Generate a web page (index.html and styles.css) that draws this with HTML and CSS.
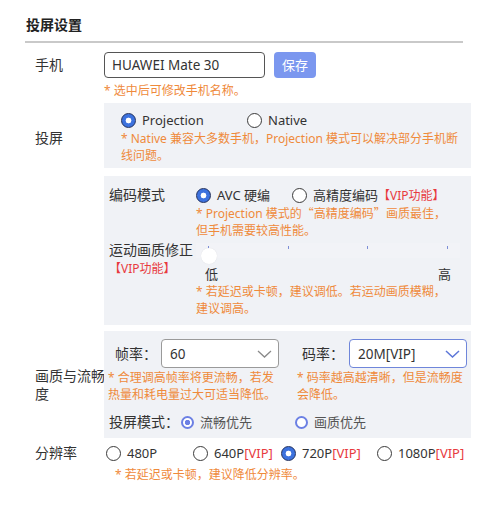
FILE: index.html
```html
<!DOCTYPE html>
<html lang="zh-CN">
<head>
<meta charset="utf-8">
<title>投屏设置</title>
<link rel="stylesheet" href="styles.css">
</head>
<body>
<div class="page">
  <h2 class="title">投屏设置</h2>
  <div class="divider"></div>

  <div class="form">
    <div class="row row-top">
      <div class="label label-input">手机</div>
      <div class="content">
        <div class="phone-line">
          <div class="input">HUAWEI Mate 30</div>
          <div class="btn">保存</div>
        </div>
        <div class="hint hint-phone">* 选中后可修改手机名称。</div>
      </div>
    </div>

    <div class="row row-center">
      <div class="label label-cast">投屏</div>
      <div class="panel panel-cast">
        <div class="radio-group group-cast">
          <span class="radio is-checked"><span class="dot"></span><span class="rtext">Projection</span></span>
          <span class="radio"><span class="dot"></span><span class="rtext">Native</span></span>
        </div>
        <div class="hint">* Native 兼容大多数手机，Projection 模式可以解决部分手机断<br>线问题。</div>
      </div>
    </div>

    <div class="row row-center row-gap8">
      <div class="label"></div>
      <div class="panel panel-codec">
        <div class="sub-label sub-label-codec">编码模式</div>
        <div class="sub-content">
          <div class="radio-group group-codec">
            <span class="radio is-checked"><span class="dot"></span><span class="rtext">AVC 硬编</span></span>
            <span class="radio"><span class="dot"></span><span class="rtext">高精度编码<span class="vip vip-tag">【VIP功能】</span></span></span>
          </div>
          <div class="hint">* Projection 模式的<span class="cjk">“</span>高精度编码<span class="cjk">”</span>画质最佳，<br>但手机需要较高性能。</div>
        </div>

        <div class="sub-label sub-label-motion">运动画质修正<br><span class="vip vip-tag">【VIP功能】</span></div>
        <div class="sub-content">
          <div class="slider">
            <div class="slider-track">
              <span class="tick"></span><span class="tick"></span><span class="tick"></span><span class="tick"></span>
            </div>
            <span class="thumb"></span>
          </div>
          <div class="slider-marks"><span>低</span><span>高</span></div>
          <div class="hint">* 若延迟或卡顿，建议调低。若运动画质模糊，<br>建议调高。</div>
        </div>
      </div>
    </div>

    <div class="row row-center row-gap6">
      <div class="label label-nowrap">画质与流畅<br>度</div>
      <div class="panel panel-quality">
        <div class="qcol">
          <div class="field">
            <span class="field-label">帧率：</span>
            <div class="select">
              <span>60</span>
              <svg class="chev" width="15" height="8" viewBox="0 0 15 8"><polyline points="1,1 7.5,7 14,1" fill="none" stroke="#8a8a8a" stroke-width="1.3"/></svg>
            </div>
          </div>
          <div class="hint hint-q">* 合理调高帧率将更流畅，若发<br>热量和耗电量过大可适当降低。</div>
        </div>
        <div class="qcol qcol-right">
          <div class="field">
            <span class="field-label field-label-r">码率：</span>
            <div class="select select-focus">
              <span>20M[VIP]</span>
              <svg class="chev" width="15" height="8" viewBox="0 0 15 8"><polyline points="1,1 7.5,7 14,1" fill="none" stroke="#5d77d8" stroke-width="1.5"/></svg>
            </div>
          </div>
          <div class="hint hint-q">* 码率越高越清晰，但是流畅度<br>会降低。</div>
        </div>
        <div class="mode-line">
          <span class="mode-label">投屏模式：</span>
          <div class="radio-group group-mode">
            <span class="radio radio-alt is-checked"><span class="dot"></span><span class="rtext">流畅优先</span></span>
            <span class="radio radio-alt"><span class="dot"></span><span class="rtext">画质优先</span></span>
          </div>
        </div>
      </div>
    </div>

    <div class="row row-top row-res">
      <div class="label label-res">分辨率</div>
      <div class="content">
        <div class="radio-group group-res">
          <span class="radio"><span class="dot"></span><span class="rtext">480P</span></span>
          <span class="radio"><span class="dot"></span><span class="rtext">640P<span class="vip">[VIP]</span></span></span>
          <span class="radio is-checked"><span class="dot"></span><span class="rtext">720P<span class="vip">[VIP]</span></span></span>
          <span class="radio"><span class="dot"></span><span class="rtext">1080P<span class="vip">[VIP]</span></span></span>
        </div>
        <div class="hint hint-res">* 若延迟或卡顿，建议降低分辨率。</div>
      </div>
    </div>
  </div>
</div>
</body>
</html>
```

FILE: styles.css
```css
* { box-sizing: border-box; }

html, body {
  margin: 0;
  padding: 0;
  background: #ffffff;
}

body {
  font-family: "Noto Sans", "Noto Sans CJK SC", sans-serif;
  font-size: 14px;
  color: #333333;
}

.page {
  padding: 15px 0 0 26px;
}

.title {
  margin: 0;
  font-size: 14px;
  line-height: 20px;
  font-weight: 700;
  color: #222222;
}

.divider {
  margin: 6px 0 0 -1px;
  width: 438px;
  height: 2px;
  background: #c9c9c9;
}

.form {
  margin-top: 9px;
}

.row {
  display: grid;
  grid-template-columns: 78px 367px;
}

.row-top { align-items: start; }
.row-center { align-items: center; }

.row-gap8 { margin-top: 8px; }
.row-gap6 { margin-top: 6px; }

.label {
  padding-left: 9px;
  line-height: 18px;
  color: #333333;
}

.label-nowrap { white-space: nowrap; }

.label-cast { padding-top: 4px; }

.label-input { line-height: 26px; }

.content { min-width: 0; }

.phone-line {
  display: flex;
  align-items: center;
  gap: 9px;
}

.input {
  width: 161px;
  height: 26px;
  border: 1px solid #555555;
  border-radius: 4px;
  padding-left: 7px;
  line-height: 24px;
  font-size: 13.5px;
  color: #333333;
  background: #ffffff;
}

.btn {
  width: 42px;
  height: 26px;
  border-radius: 4px;
  background: #7b97ef;
  color: #ffffff;
  font-size: 13px;
  line-height: 26px;
  text-align: center;
}

.hint {
  font-size: 12px;
  line-height: 17px;
  color: #ef8a3b;
  white-space: nowrap;
}

.hint-phone {
  margin-top: 4px;
  margin-bottom: 4px;
}

.cjk {
  font-family: "Noto Sans CJK SC", sans-serif;
  line-height: 0;
}

.vip {
  color: #e83a3e;
}

.vip-tag {
  font-size: 12px;
}

.panel {
  background: #f0f2f6;
}

.panel-cast {
  padding: 7px 4px 4px 17px;
}

/* radios */
.radio-group {
  display: flex;
  align-items: center;
  height: 20px;
}

.radio {
  display: inline-flex;
  align-items: center;
  line-height: 20px;
  white-space: nowrap;
}

.rtext {
  font-size: 13px;
}

.dot {
  flex: none;
  width: 15px;
  height: 15px;
  border: 1px solid #3a3a3a;
  border-radius: 50%;
  background: #ffffff;
  margin-right: 6px;
}

.radio.is-checked .dot {
  border-color: #1f2f5e;
  background: radial-gradient(circle, #ffffff 0 2.6px, #3d72de 3.2px);
}

.group-cast .radio:first-child { width: 126px; }
.group-codec .radio:first-child { width: 96px; }

.radio-alt .dot {
  width: 13px;
  height: 13px;
  border: 2px solid #6c80e4;
  margin-right: 6px;
}

.radio-alt.is-checked .dot {
  border-color: #6c80e4;
  background: radial-gradient(circle, #6c80e4 0 2.4px, #ffffff 3px);
}

.radio-alt .rtext { color: #555555; }

/* codec / motion panel */
.panel-codec {
  display: grid;
  grid-template-columns: 87px 1fr;
  padding: 9px 0 8px 5px;
}

.sub-label {
  line-height: 20px;
  color: #333333;
  white-space: nowrap;
}

.sub-label-motion {
  line-height: 18px;
  margin-top: 2px;
}

.sub-content { min-width: 0; }

.slider {
  position: relative;
  width: 264px;
  height: 26px;
  padding-top: 4px;
}

.slider-track {
  height: 15px;
  background: #f2f3f7;
  display: flex;
  justify-content: space-between;
  padding: 3px 12px 0 12px;
}

.tick {
  width: 1px;
  height: 3px;
  background: #7d8ed6;
}

.thumb {
  position: absolute;
  left: 5px;
  top: 9px;
  width: 16px;
  height: 16px;
  border-radius: 50%;
  background: #ffffff;
  box-shadow: 0 0 1px rgba(0, 0, 0, 0.12);
}

.slider-marks {
  width: 264px;
  display: flex;
  justify-content: space-between;
  padding: 0 9px;
  line-height: 18px;
  font-size: 13px;
  color: #333333;
}

/* quality panel */
.panel-quality {
  display: grid;
  grid-template-columns: 176px 170px;
  column-gap: 13px;
  padding: 8px 0 6px 4px;
}

.field {
  display: flex;
  align-items: center;
}

.field-label {
  width: 53px;
  padding-left: 7px;
  line-height: 20px;
  white-space: nowrap;
}

.field-label-r {
  width: 52px;
  padding-left: 5px;
}

.select {
  width: 118px;
  height: 29px;
  border: 1px solid #9a9a9a;
  border-radius: 4px;
  background: #ffffff;
  display: flex;
  align-items: center;
  justify-content: space-between;
  padding: 0 6px 0 8px;
  font-size: 13.5px;
  color: #333333;
}

.select-focus {
  border-color: #6f86da;
}

.chev { display: block; }

.hint-q { margin-top: 1px; }

.mode-line {
  grid-column: 1 / span 2;
  display: flex;
  align-items: center;
  margin-top: 9px;
  padding-left: 1px;
  line-height: 20px;
}

.mode-label {
  width: 72px;
  white-space: nowrap;
}

.group-mode .radio:first-child { width: 114px; }

/* resolution */
.row-res { margin-top: 5px; }

.label-res { line-height: 20px; }

.group-res { padding-left: 2px; }
.group-res .radio:nth-child(1) { width: 87px; }
.group-res .radio:nth-child(2) { width: 88px; }
.group-res .radio:nth-child(3) { width: 96px; }

.hint-res {
  margin-top: 3px;
  padding-left: 11px;
}
```
